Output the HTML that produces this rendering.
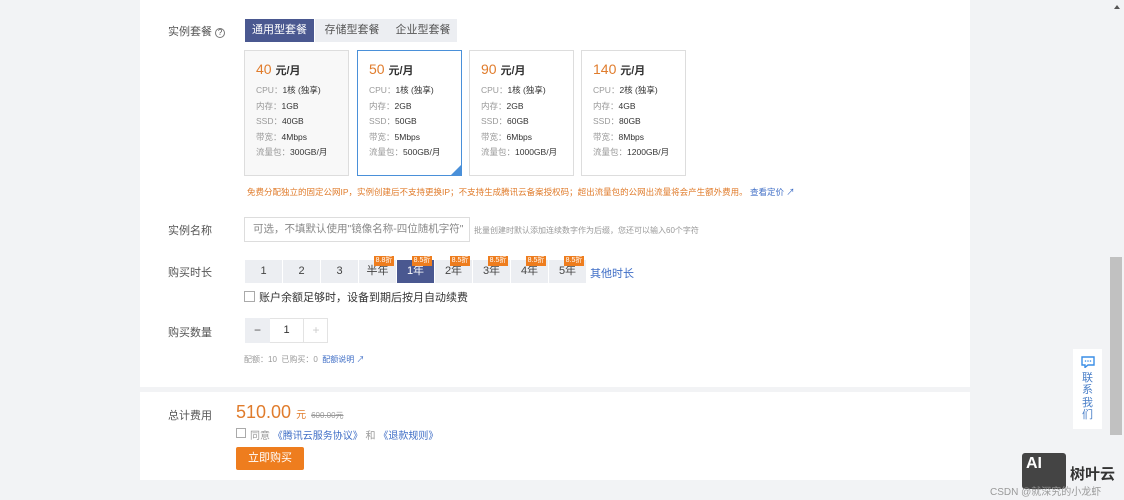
<!DOCTYPE html>
<html><head><meta charset="utf-8"><style>
*{box-sizing:border-box;margin:0;padding:0}
body{width:1124px;height:500px;overflow:hidden;background:#f2f3f5;font-family:"Liberation Sans","Noto Sans CJK SC",sans-serif;color:#333;position:relative;font-size:12px}
.a{position:absolute}
.p1{left:140px;top:0;width:830px;height:387px;background:#fff}
.p2{left:140px;top:392px;width:830px;height:88px;background:#fff}
.lbl{color:#555;font-size:11px}
.tab{top:19px;height:23px;line-height:23px;text-align:center;background:#eceef2;color:#555;font-size:11px}
.card{top:50px;width:105px;height:126px;border:1px solid #ddd;background:#fff;padding:10px 0 0 11px}
.card .pr{color:#e07c2c;font-size:14px;margin-bottom:5px}
.card .pr b{color:#333;font-size:11px}
.card div.r{font-size:8.5px;color:#333;line-height:15.5px}
.card span.k{color:#999}
.du{top:260px;width:37px;height:23px;line-height:23px;text-align:center;background:#eceef2;color:#444;font-size:11px}
.bd{top:256px;width:20px;height:10px;background:#ee7d1e;color:#fff;font-size:7px;line-height:10px;text-align:center}
</style></head><body>
<div class="a p1"></div><div class="a p2"></div>
<div class="a lbl" style="left:168px;top:23px">实例套餐 <span style="display:inline-block;width:10px;height:10px;border:1px solid #777;border-radius:50%;font-size:8px;line-height:8px;text-align:center">?</span></div>
<div class="a tab" style="left:245px;width:69px;background:#4a5890;color:#fff">通用型套餐</div>
<div class="a tab" style="left:315px;width:74px">存储型套餐</div>
<div class="a tab" style="left:389px;width:68px">企业型套餐</div>

<div class="a card" style="left:244px;background:#f8f8f8"><div class="pr">40 <b>元/月</b></div><div class="r"><span class="k">CPU：</span>1核 (独享)</div><div class="r"><span class="k">内存：</span>1GB</div><div class="r"><span class="k">SSD：</span>40GB</div><div class="r"><span class="k">带宽：</span>4Mbps</div><div class="r"><span class="k">流量包：</span>300GB/月</div></div>
<div class="a card" style="left:357px;border-color:#4a90d9"><div class="pr">50 <b>元/月</b></div><div class="r"><span class="k">CPU：</span>1核 (独享)</div><div class="r"><span class="k">内存：</span>2GB</div><div class="r"><span class="k">SSD：</span>50GB</div><div class="r"><span class="k">带宽：</span>5Mbps</div><div class="r"><span class="k">流量包：</span>500GB/月</div><div class="a" style="right:0;bottom:0;width:0;height:0;border-left:10px solid transparent;border-bottom:10px solid #4a90d9"></div></div>
<div class="a card" style="left:469px"><div class="pr">90 <b>元/月</b></div><div class="r"><span class="k">CPU：</span>1核 (独享)</div><div class="r"><span class="k">内存：</span>2GB</div><div class="r"><span class="k">SSD：</span>60GB</div><div class="r"><span class="k">带宽：</span>6Mbps</div><div class="r"><span class="k">流量包：</span>1000GB/月</div></div>
<div class="a card" style="left:581px"><div class="pr">140 <b>元/月</b></div><div class="r"><span class="k">CPU：</span>2核 (独享)</div><div class="r"><span class="k">内存：</span>4GB</div><div class="r"><span class="k">SSD：</span>80GB</div><div class="r"><span class="k">带宽：</span>8Mbps</div><div class="r"><span class="k">流量包：</span>1200GB/月</div></div>
<div class="a" style="left:247px;top:186px;font-size:8.5px;color:#e07c2c;white-space:nowrap">免费分配独立的固定公网IP，实例创建后不支持更换IP；不支持生成腾讯云备案授权码；超出流量包的公网出流量将会产生额外费用。 <span style="color:#3f6ec6">查看定价 ↗</span></div>

<div class="a lbl" style="left:168px;top:222px">实例名称</div>
<div class="a" style="left:244px;top:217px;width:226px;height:25px;border:1px solid #ddd;padding-left:8px;line-height:23px;font-size:10.5px;color:#888;white-space:nowrap;overflow:hidden">可选，不填默认使用"镜像名称-四位随机字符"</div>
<div class="a" style="left:474px;top:225px;font-size:8px;color:#999;white-space:nowrap">批量创建时默认添加连续数字作为后缀，您还可以输入60个字符</div>

<div class="a lbl" style="left:168px;top:264px">购买时长</div>
<div class="a du" style="left:245px">1</div><div class="a du" style="left:283px">2</div><div class="a du" style="left:321px">3</div><div class="a du" style="left:359px">半年</div><div class="a du" style="left:397px;background:#4a5890;color:#fff">1年</div><div class="a du" style="left:435px">2年</div><div class="a du" style="left:473px">3年</div><div class="a du" style="left:511px">4年</div><div class="a du" style="left:549px">5年</div>
<div class="a bd" style="left:374px">8.8折</div><div class="a bd" style="left:412px">8.5折</div><div class="a bd" style="left:450px">8.5折</div><div class="a bd" style="left:488px">8.5折</div><div class="a bd" style="left:526px">8.5折</div><div class="a bd" style="left:564px">8.5折</div>
<div class="a" style="left:590px;top:265px;font-size:11px;color:#3f6ec6">其他时长</div>
<div class="a" style="left:244px;top:291px;width:11px;height:11px;border:1px solid #aaa;background:#fff"></div>
<div class="a" style="left:259px;top:289px;font-size:11px;color:#333">账户余额足够时，设备到期后按月自动续费</div>

<div class="a lbl" style="left:168px;top:324px">购买数量</div>
<div class="a" style="left:245px;top:318px;width:83px;height:25px;border:1px solid #e3e3e3"></div>
<div class="a" style="left:245px;top:318px;width:25px;height:25px;background:#eceef2;text-align:center;line-height:25px;color:#555">−</div>
<div class="a" style="left:270px;top:318px;width:33px;height:25px;text-align:center;line-height:25px;font-size:11px">1</div>
<div class="a" style="left:303px;top:318px;width:25px;height:25px;border-left:1px solid #e3e3e3;text-align:center;line-height:25px;color:#ccc">+</div>
<div class="a" style="left:244px;top:354px;font-size:8px;color:#999">配额：10 &nbsp;已购买：0 &nbsp;<span style="color:#3f6ec6">配额说明 ↗</span></div>

<div class="a lbl" style="left:168px;top:407px">总计费用</div>
<div class="a" style="left:236px;top:402px;font-size:18px;color:#e07c2c;white-space:nowrap">510.00 <span style="font-size:10px">元</span> <span style="font-size:8px;color:#999;text-decoration:line-through">600.00元</span></div>
<div class="a" style="left:236px;top:428px;width:10px;height:10px;border:1px solid #aaa"></div>
<div class="a" style="left:250px;top:427px;font-size:10px;color:#999;white-space:nowrap">同意 <span style="color:#3f6ec6">《腾讯云服务协议》</span> 和 <span style="color:#3f6ec6">《退款规则》</span></div>
<div class="a" style="left:236px;top:447px;width:68px;height:23px;background:#ee7d1e;color:#fff;text-align:center;line-height:23px;font-size:11px;border-radius:2px">立即购买</div>

<div class="a" style="left:1073px;top:349px;width:29px;height:80px;background:#fff;text-align:center;color:#4a7fc8;font-size:11px;line-height:12.5px;padding-top:7px">
<svg width="14" height="12" viewBox="0 0 14 12"><path d="M1 1h12v8H7l-3 2.5V9H1z" fill="none" stroke="#3a8ee6" stroke-width="1.4"/><circle cx="4.5" cy="5" r=".8" fill="#3a8ee6"/><circle cx="7" cy="5" r=".8" fill="#3a8ee6"/><circle cx="9.5" cy="5" r=".8" fill="#3a8ee6"/></svg><br>联<br>系<br>我<br>们</div>
<div class="a" style="left:1110px;top:257px;width:12px;height:178px;background:#c1c1c1"></div>
<div class="a" style="left:1114px;top:5px;width:0;height:0;border-left:3px solid transparent;border-right:3px solid transparent;border-bottom:4px solid #555"></div>
<div class="a" style="left:1022px;top:453px;width:44px;height:36px;background:#444;border-radius:3px;color:#fff;font-weight:bold;font-size:16px;padding:2px 0 0 4px">AI</div>
<div class="a" style="left:1070px;top:463px;font-size:15px;font-weight:bold;color:#333">树叶云</div>
<div class="a" style="left:990px;top:483px;font-size:10px;color:#999;white-space:nowrap">CSDN @就深究的小龙虾</div>
</body></html>
